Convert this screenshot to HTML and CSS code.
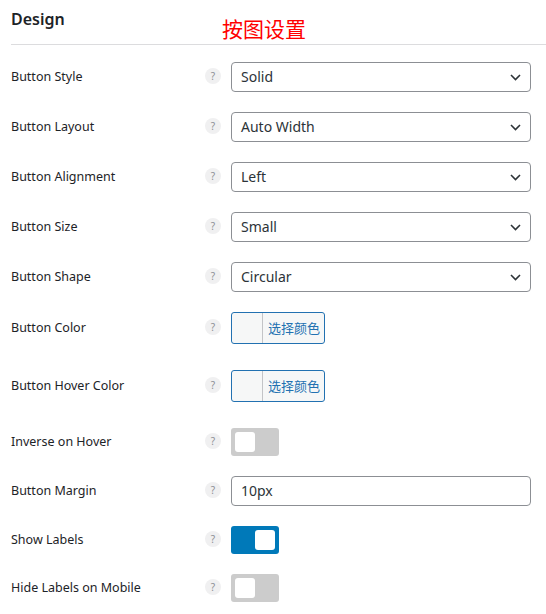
FILE: index.html
```html
<!DOCTYPE html>
<html lang="en">
<head>
    <meta charset="UTF-8">
    <title>Design</title>
    <link rel="stylesheet" href="styles.css">
</head>
<body>
    <div class="panel">
        <div class="panel-head">
            <h2>Design</h2>
            <span class="note">按图设置</span>
        </div>
        <div class="fields">
            <div class="field">
                <label>Button Style</label>
                <span class="help">?</span>
                <div class="select">Solid<svg width="11" height="7" viewBox="0 0 11 7"><path d="M1 1l4.5 4.5L10 1" fill="none" stroke="#2c3338" stroke-width="1.6"/></svg></div>
            </div>
            <div class="field">
                <label>Button Layout</label>
                <span class="help">?</span>
                <div class="select">Auto Width<svg width="11" height="7" viewBox="0 0 11 7"><path d="M1 1l4.5 4.5L10 1" fill="none" stroke="#2c3338" stroke-width="1.6"/></svg></div>
            </div>
            <div class="field">
                <label>Button Alignment</label>
                <span class="help">?</span>
                <div class="select">Left<svg width="11" height="7" viewBox="0 0 11 7"><path d="M1 1l4.5 4.5L10 1" fill="none" stroke="#2c3338" stroke-width="1.6"/></svg></div>
            </div>
            <div class="field">
                <label>Button Size</label>
                <span class="help">?</span>
                <div class="select">Small<svg width="11" height="7" viewBox="0 0 11 7"><path d="M1 1l4.5 4.5L10 1" fill="none" stroke="#2c3338" stroke-width="1.6"/></svg></div>
            </div>
            <div class="field">
                <label>Button Shape</label>
                <span class="help">?</span>
                <div class="select">Circular<svg width="11" height="7" viewBox="0 0 11 7"><path d="M1 1l4.5 4.5L10 1" fill="none" stroke="#2c3338" stroke-width="1.6"/></svg></div>
            </div>
            <div class="field field-color">
                <label>Button Color</label>
                <span class="help">?</span>
                <div><button class="picker"><span class="swatch"></span><span class="picker-text">选择颜色</span></button></div>
            </div>
            <div class="field field-color">
                <label>Button Hover Color</label>
                <span class="help">?</span>
                <div><button class="picker"><span class="swatch"></span><span class="picker-text">选择颜色</span></button></div>
            </div>
            <div class="field">
                <label>Inverse on Hover</label>
                <span class="help">?</span>
                <div><span class="toggle"><span class="knob"></span></span></div>
            </div>
            <div class="field">
                <label>Button Margin</label>
                <span class="help">?</span>
                <div class="text-input">10px</div>
            </div>
            <div class="field">
                <label>Show Labels</label>
                <span class="help">?</span>
                <div><span class="toggle on"><span class="knob"></span></span></div>
            </div>
            <div class="field">
                <label>Hide Labels on Mobile</label>
                <span class="help">?</span>
                <div><span class="toggle"><span class="knob"></span></span></div>
            </div>
        </div>
    </div>
</body>
</html>
```

FILE: styles.css
```css
body {
    margin: 0;
    background: #fff;
    font-family: "Noto Sans", "Noto Sans CJK SC", sans-serif;
    color: #1d2327;
}
.panel {
    padding-left: 11px;
}
.panel-head {
    display: flex;
    height: 44px;
    border-bottom: 1px solid #dcdcde;
}
.panel-head h2 {
    margin: 0;
    width: 211px;
    padding-top: 7px;
    font-size: 16px;
    line-height: 24px;
    font-weight: 600;
    color: #1d2327;
}
.note {
    padding-top: 15px;
    font-family: "Noto Sans CJK SC", sans-serif;
    font-size: 21px;
    line-height: 26px;
    color: #ff0000;
}
.fields {
    display: flex;
    flex-direction: column;
    gap: 20px;
    padding-top: 17px;
}
.field {
    display: grid;
    grid-template-columns: 194px 26px 300px;
    align-items: center;
}
.field label {
    font-size: 12.5px;
    margin-top: -2px;
}
.field-color {
    margin-bottom: 6px;
}
.help {
    width: 16px;
    height: 16px;
    margin-top: -2px;
    border-radius: 50%;
    background: #f0f0f1;
    color: #8c8f94;
    font-size: 10px;
    line-height: 16px;
    text-align: center;
}
.select, .text-input {
    box-sizing: border-box;
    height: 30px;
    border: 1px solid #8c8f94;
    border-radius: 4px;
    padding: 0 9px;
    font-size: 14px;
    line-height: 28px;
    color: #2c3338;
}
.select {
    display: flex;
    justify-content: space-between;
    align-items: center;
}
.picker {
    display: flex;
    align-items: stretch;
    height: 32px;
    padding: 0;
    border: 1px solid #2271b1;
    border-radius: 3px;
    background: #f6f7f7;
    font-family: "Noto Sans CJK SC", sans-serif;
    cursor: pointer;
}
.swatch {
    width: 30px;
    border-right: 1px solid #c3c4c7;
}
.picker-text {
    padding: 0 4px 0 5px;
    font-size: 13px;
    line-height: 30px;
    color: #2271b1;
}
.toggle {
    display: flex;
    box-sizing: border-box;
    width: 48px;
    height: 28px;
    padding: 4px;
    border-radius: 3px;
    background: #cccccc;
}
.toggle.on {
    background: #0079b9;
    justify-content: flex-end;
}
.knob {
    width: 20px;
    height: 20px;
    border-radius: 3px;
    background: #fff;
}
```
